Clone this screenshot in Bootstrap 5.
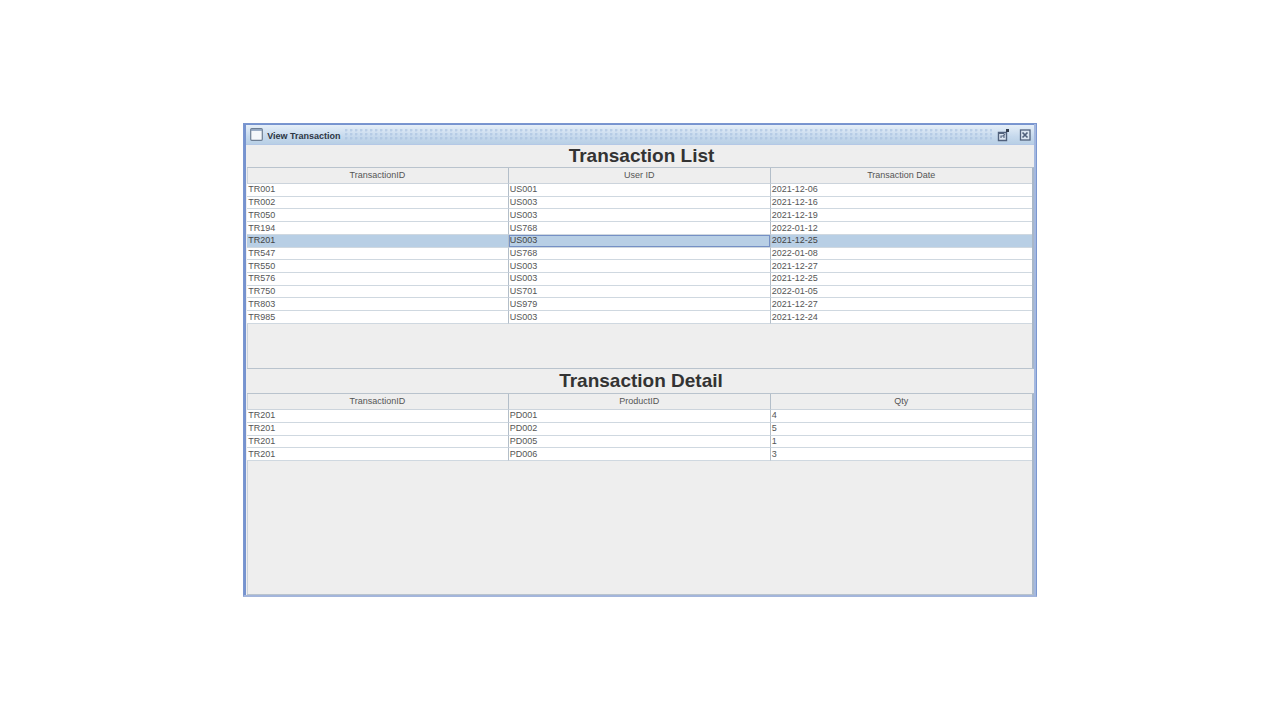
<!DOCTYPE html>
<html lang="en">
<head>
<meta charset="utf-8">
<meta name="viewport" content="width=device-width, initial-scale=1">
<title>View Transaction</title>
<link href="https://cdn.jsdelivr.net/npm/bootstrap@5.3.0/dist/css/bootstrap.min.css" rel="stylesheet">
<style>
body { font-family: "Liberation Sans", Arial, sans-serif; background: #fff; }
.frame { width: 62%; background: #eee; border: 1px solid #7b97d0; border-width: 1px 1px 2px; border-bottom-color: #a3b5db; box-shadow: inset 2px 0 #7693cf, inset -2px 0 #a4b8df, inset 0 1px #7693cf; padding: 0 2px 0 3px; color: #333; }
.titlebar { height: 20px; margin: 1px 0 0 -1px; padding: 0 2px 0 4px; gap: 4px; background: linear-gradient(#e6eff8, #c6d9ed 60%, #b8cfe5); border-bottom: 1px solid #b4c8e6; }
.titlebar h1 { font-size: 9px; line-height: 20px; font-weight: 700; color: #2d3644; padding-top: 2px; }
.grip { height: 12px; background: radial-gradient(circle at 1px 1px, #a6bfdf 1px, transparent 2px) 0 0 / 5px 4px; opacity: .6; }
.tool { width: 14px; height: 14px; }
.heading { font-size: 19px; line-height: 22px; font-weight: 700; color: #333; padding-left: 2px; }
.pane { height: 202px; border: 1px solid #b9c3cd; border-left: 0; border-right: 2px solid #a9b7c8; box-shadow: inset 1px 0 #ccd3db; }
.pane + .heading { padding: 1px 0 1px 1px; }
.grid { table-layout: fixed; font-size: 9px; line-height: 11px; color: #555; border-collapse: separate; border-spacing: 0; }
.grid th { height: 15px; line-height: 14px; font-weight: 400; text-align: center; padding: 0 0 1px; border-bottom: 1px solid #ccd4dc; }
.grid th:first-child { width: 33.2%; }
.grid td { padding: 0 1px; background: #fff; border-bottom: 1px solid #cfd8e0; }
.grid th + th, .grid td + td { border-left: 1px solid #b3bec9; }
.list { height: 156px; }
.detail { height: 67px; }
.grid .picked td { background: #b8cfe5; color: #444; }
.grid .picked td.cursor { box-shadow: inset 0 0 0 1px #7590c5; }
</style>
</head>
<body>
<div class="min-vh-100 d-flex align-items-center justify-content-center">
<main class="frame">
  <header class="titlebar d-flex align-items-center">
    <svg width="13" height="13" viewBox="0 0 13 13" aria-hidden="true"><rect x=".7" y=".7" width="11.6" height="11.6" rx="1" fill="#f4f7fa" stroke="#6d7e93" stroke-width="1.2"/><path d="M1 2h11" stroke="#7f96b5" stroke-width="1.5"/></svg>
    <h1 class="m-0 text-nowrap">View Transaction</h1>
    <div class="grip flex-grow-1"></div>
    <button class="tool btn p-0 border-0 d-flex align-items-center" type="button" aria-label="Maximize"><svg width="14" height="14" viewBox="0 0 14 14"><path d="M2.5 4.5h8v8h-8zM2 5.2h6" fill="#dce6f2" stroke="#51617c" stroke-width="1.4"/><path d="M5 10V8h3v2M7 8l2-2" fill="none" stroke="#5d6c85" stroke-width="1.2"/><path d="M10 1h3v3h-3z" fill="#333d4d"/></svg></button>
    <button class="tool btn p-0 border-0 ms-1 d-flex align-items-center" type="button" aria-label="Close"><svg width="14" height="14" viewBox="0 0 14 14"><rect x="2.5" y="2" width="9.5" height="10" fill="#dce6f2" stroke="#51617c" stroke-width="1.3"/><path d="M4.5 4.5l5 5M9.5 4.5l-5 5" stroke="#51617c" stroke-width="1.7"/></svg></button>
  </header>
  <h2 class="heading m-0 text-center">Transaction List</h2>
  <section class="pane" aria-label="Transaction List">
    <table class="grid list w-100">
      <thead><tr><th>TransactionID</th><th>User ID</th><th>Transaction Date</th></tr></thead>
      <tbody>
        <tr><td>TR001</td><td>US001</td><td>2021-12-06</td></tr>
        <tr><td>TR002</td><td>US003</td><td>2021-12-16</td></tr>
        <tr><td>TR050</td><td>US003</td><td>2021-12-19</td></tr>
        <tr><td>TR194</td><td>US768</td><td>2022-01-12</td></tr>
        <tr class="picked"><td>TR201</td><td class="cursor">US003</td><td>2021-12-25</td></tr>
        <tr><td>TR547</td><td>US768</td><td>2022-01-08</td></tr>
        <tr><td>TR550</td><td>US003</td><td>2021-12-27</td></tr>
        <tr><td>TR576</td><td>US003</td><td>2021-12-25</td></tr>
        <tr><td>TR750</td><td>US701</td><td>2022-01-05</td></tr>
        <tr><td>TR803</td><td>US979</td><td>2021-12-27</td></tr>
        <tr><td>TR985</td><td>US003</td><td>2021-12-24</td></tr>
      </tbody>
    </table>
  </section>
  <h2 class="heading m-0 text-center">Transaction Detail</h2>
  <section class="pane" aria-label="Transaction Detail">
    <table class="grid detail w-100">
      <thead><tr><th>TransactionID</th><th>ProductID</th><th>Qty</th></tr></thead>
      <tbody>
        <tr><td>TR201</td><td>PD001</td><td>4</td></tr>
        <tr><td>TR201</td><td>PD002</td><td>5</td></tr>
        <tr><td>TR201</td><td>PD005</td><td>1</td></tr>
        <tr><td>TR201</td><td>PD006</td><td>3</td></tr>
      </tbody>
    </table>
  </section>
</main>
</div>
<script src="https://cdn.jsdelivr.net/npm/bootstrap@5.3.0/dist/js/bootstrap.bundle.min.js"></script>
</body>
</html>
